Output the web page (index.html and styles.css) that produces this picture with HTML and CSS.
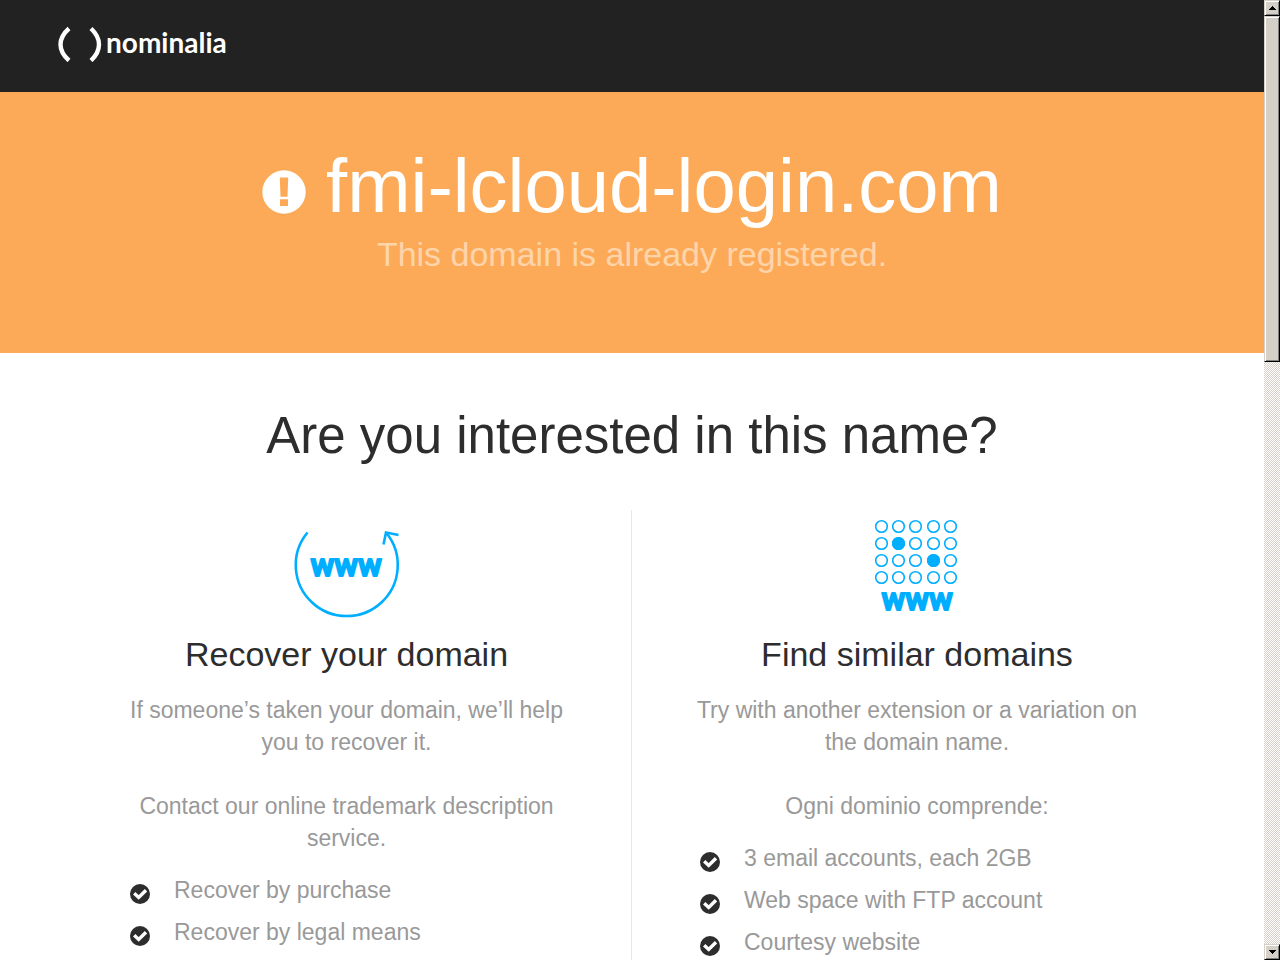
FILE: index.html
```html
<!DOCTYPE html>
<html lang="en">
<head>
    <meta charset="utf-8">
    <title>fmi-lcloud-login.com</title>
    <link rel="stylesheet" href="styles.css">
</head>
<body>
    <svg class="sprite" width="0" height="0">
        <symbol id="check" viewBox="0 0 20 20">
            <circle cx="10" cy="10" r="10" fill="#2d2d2d"/>
            <path d="M4.200 9.200l4.500 4.300 7.300-7.200" fill="none" stroke="#fff" stroke-width="3.400"/>
        </symbol>
        <symbol id="ring" viewBox="0 0 14 14">
            <circle cx="7" cy="7" r="5.8" fill="none" stroke="#00aeff" stroke-width="1.6"/>
        </symbol>
    </svg>

    <div class="page">
        <header class="header">
            <a class="logo" href="#">
                <svg width="44" height="36" viewBox="0 0 44 36" fill="none" stroke="#fff" stroke-width="4.400">
                    <path d="M11 2.500Q2.500 10 2.500 18.500t8.500 16M33 2.500Q41 10 41 18.500t-8 16"/>
                </svg>
                <span>nominalia</span>
            </a>
        </header>

        <section class="banner">
            <h1>
                <svg class="alert" width="44" height="44" viewBox="0 0 44 44">
                    <circle cx="22" cy="22" r="21.7" fill="#fff"/>
                    <path d="M17.8 7.500h8.400l-.7 19.200h-7zM18 29.200h8v6.800h-8z" fill="#fdaa58"/>
                </svg>
                <span>fmi-lcloud-login.com</span>
            </h1>
            <p>This domain is already registered.</p>
        </section>

        <main class="content">
            <h2>Are you interested in this name?</h2>
            <div class="columns">
                <section class="column">
                    <svg class="picture" width="116" height="116" viewBox="0 0 116 116">
                        <path d="M18.500 22.500A51 51 0 1 0 97 22.500" fill="none" stroke="#00aeff" stroke-width="2.600"/>
                        <path d="M94.500 34.500L97 22.500l12.500 2.500" fill="none" stroke="#00aeff" stroke-width="2.600"/>
                        <text class="www" x="57" y="66">www</text>
                    </svg>
                    <h3>Recover your domain</h3>
                    <p>If someone’s taken your domain, we’ll help you to recover it.</p>
                    <p>Contact our online trademark description service.</p>
                    <ul>
                        <li><svg width="20" height="20"><use href="#check"/></svg>Recover by purchase</li>
                        <li><svg width="20" height="20"><use href="#check"/></svg>Recover by legal means</li>
                    </ul>
                </section>
                <section class="column">
                    <svg class="picture" width="116" height="116" viewBox="0 0 116 116">
                        <g id="row">
                            <use href="#ring" x="15.500" y="9.500" width="14" height="14"/>
                            <use href="#ring" x="32.500" y="9.500" width="14" height="14"/>
                            <use href="#ring" x="49.500" y="9.500" width="14" height="14"/>
                            <use href="#ring" x="67.500" y="9.500" width="14" height="14"/>
                            <use href="#ring" x="84.500" y="9.500" width="14" height="14"/>
                        </g>
                        <use href="#row" y="17"/>
                        <use href="#row" y="34"/>
                        <use href="#row" y="51"/>
                        <circle cx="39.500" cy="33.500" r="6.500" fill="#00aeff"/>
                        <circle cx="74.500" cy="50.500" r="6.500" fill="#00aeff"/>
                        <text class="www" x="58" y="100">www</text>
                    </svg>
                    <h3>Find similar domains</h3>
                    <p>Try with another extension or a variation on the domain name.</p>
                    <p>Ogni dominio comprende:</p>
                    <ul>
                        <li><svg width="20" height="20"><use href="#check"/></svg>3 email accounts, each 2GB</li>
                        <li><svg width="20" height="20"><use href="#check"/></svg>Web space with FTP account</li>
                        <li><svg width="20" height="20"><use href="#check"/></svg>Courtesy website</li>
                    </ul>
                </section>
            </div>
        </main>
    </div>

    <div class="scrollbar">
        <button type="button" aria-label="Scroll up"><svg width="7" height="4" shape-rendering="crispEdges"><path d="M3 0h1v1h1v1h1v1h1v1H0V3h1V2h1V1h1z"/></svg></button>
        <div class="thumb"></div>
        <button type="button" class="down" aria-label="Scroll down"><svg width="7" height="4" shape-rendering="crispEdges"><path d="M0 0h7v1H6v1H5v1H4v1H3V3H2V2H1V1H0z"/></svg></button>
    </div>
</body>
</html>
```
FILE: styles.css
```css
* {
    box-sizing: border-box;
}
body {
    display: flex;
    height: 100vh;
    margin: 0;
    overflow: hidden;
    background: #fff;
    color: #2d2d2d;
    font-family: "Liberation Sans", Arial, sans-serif;
    font-size: 23px;
    line-height: 32px;
}
h1, h2, h3, p, ul {
    margin: 0;
    font-weight: normal;
}
.sprite {
    position: absolute;
}
.page {
    flex: 1;
    overflow: hidden;
}

/* header */
.header {
    padding: 26px 58px 30px;
    background: #222;
}
.logo {
    display: flex;
    gap: 4px;
    color: #fff;
    font-family: Lato, sans-serif;
    font-size: 28px;
    font-weight: bold;
    text-decoration: none;
}

/* banner */
.banner {
    padding: 48px 20px 79px;
    background: #fdaa58;
    color: #fff;
    text-align: center;
}
.banner h1 {
    display: flex;
    justify-content: center;
    align-items: center;
    gap: 20px;
    font-size: 76px;
    line-height: 92px;
}
.alert {
    margin-top: 12px;
}
.banner p {
    margin-top: 2px;
    color: #fed5ab;
    font-size: 34px;
    line-height: 40px;
}

/* content */
.content {
    max-width: 1140px;
    margin: 0 auto;
    padding-top: 53px;
    text-align: center;
}
.content h2 {
    margin-bottom: 44px;
    font-size: 51px;
    line-height: 60px;
}
.columns {
    display: grid;
    grid-template-columns: 1fr 1fr;
}
.column {
    min-height: 500px;
    padding: 0 62px;
    color: #999;
}
.column:first-child {
    border-right: 1px solid #e8e8e8;
}
.picture {
    display: block;
    margin: 0 auto;
}
.www {
    fill: #00aeff;
    stroke: #00aeff;
    stroke-width: 2px;
    stroke-linejoin: round;
    font: 500 32px Roboto, sans-serif;
    text-anchor: middle;
}
.column h3 {
    margin: 8px 0 20px;
    color: #2d2d2d;
    font-size: 34px;
    line-height: 40px;
}
.column p + p {
    margin-top: 32px;
}
.column ul {
    padding: 0 6px;
    margin-top: 20px;
    list-style: none;
    text-align: left;
}
.column li {
    display: flex;
    gap: 24px;
    margin-bottom: 10px;
}
.column li svg {
    flex: none;
    margin-top: 10px;
}

/* scrollbar */
.scrollbar {
    display: flex;
    flex-direction: column;
    width: 16px;
    background: repeating-conic-gradient(#d4d0c8 0 25%, #fff 0 50%) 0 0 / 2px 2px;
}
.scrollbar button,
.thumb {
    border: 1px solid;
    border-color: #d4d0c8 #000 #000 #d4d0c8;
    background: #d4d0c8;
    box-shadow: inset 1px 1px #fff, inset -1px -1px #808080;
}
.scrollbar button {
    display: flex;
    justify-content: center;
    align-items: center;
    height: 16px;
    padding: 0;
}
.thumb {
    height: 36%;
}
.scrollbar .down {
    margin-top: auto;
}
```
